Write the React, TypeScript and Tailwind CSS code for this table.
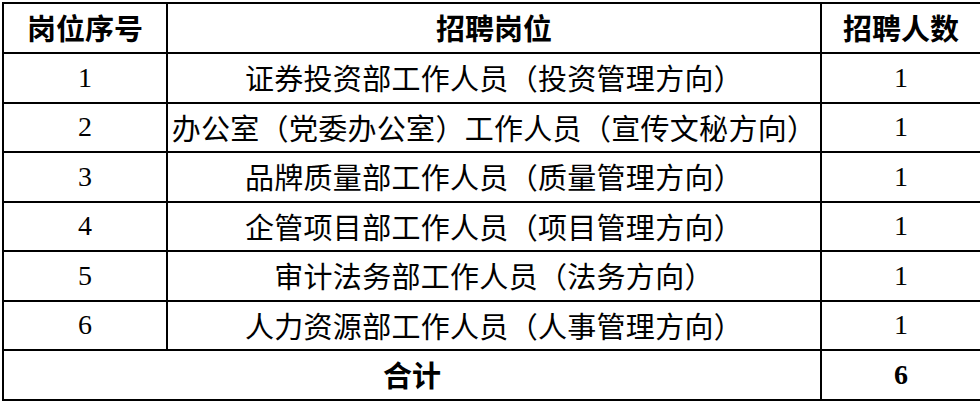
const rows = [
  { no: "1", post: "证券投资部工作人员（投资管理方向）", count: "1" },
  { no: "2", post: "办公室（党委办公室）工作人员（宣传文秘方向）", count: "1" },
  { no: "3", post: "品牌质量部工作人员（质量管理方向）", count: "1" },
  { no: "4", post: "企管项目部工作人员（项目管理方向）", count: "1" },
  { no: "5", post: "审计法务部工作人员（法务方向）", count: "1" },
  { no: "6", post: "人力资源部工作人员（人事管理方向）", count: "1" },
];

const cjk = "font-['Noto_Sans_CJK_SC',sans-serif]";
const serif = "font-['Liberation_Serif','Times_New_Roman',serif]";
const cell = "border-2 border-black text-center align-middle p-0";

export default function App() {
  return (
    <div className="w-[980px] h-[401px] bg-white text-black pt-[2px] pl-[2px]">
      <table className="border-collapse w-[978px] table-fixed">
        <colgroup>
          <col className="w-[164px]" />
          <col className="w-[654px]" />
          <col className="w-[160px]" />
        </colgroup>
        <thead>
          <tr className="h-[50px]">
            <th className={`${cell} ${cjk} text-[29px] font-bold`}>岗位序号</th>
            <th className={`${cell} ${cjk} text-[29px] font-bold`}>招聘岗位</th>
            <th className={`${cell} ${cjk} text-[29px] font-bold`}>招聘人数</th>
          </tr>
        </thead>
        <tbody>
          {rows.map((r) => (
            <tr key={r.no} className="h-[49.5px]">
              <td className={`${cell} ${serif} text-[28px]`}>{r.no}</td>
              <td className={`${cell} ${cjk} text-[29px] tracking-[0.3px]`}>{r.post}</td>
              <td className={`${cell} ${serif} text-[28px]`}>{r.count}</td>
            </tr>
          ))}
          <tr className="h-[49.5px]">
            <td colSpan={2} className={`${cell} ${cjk} text-[29px] font-bold`}>
              合计
            </td>
            <td className={`${cell} ${serif} text-[28px] font-bold`}>6</td>
          </tr>
        </tbody>
      </table>
    </div>
  );
}
